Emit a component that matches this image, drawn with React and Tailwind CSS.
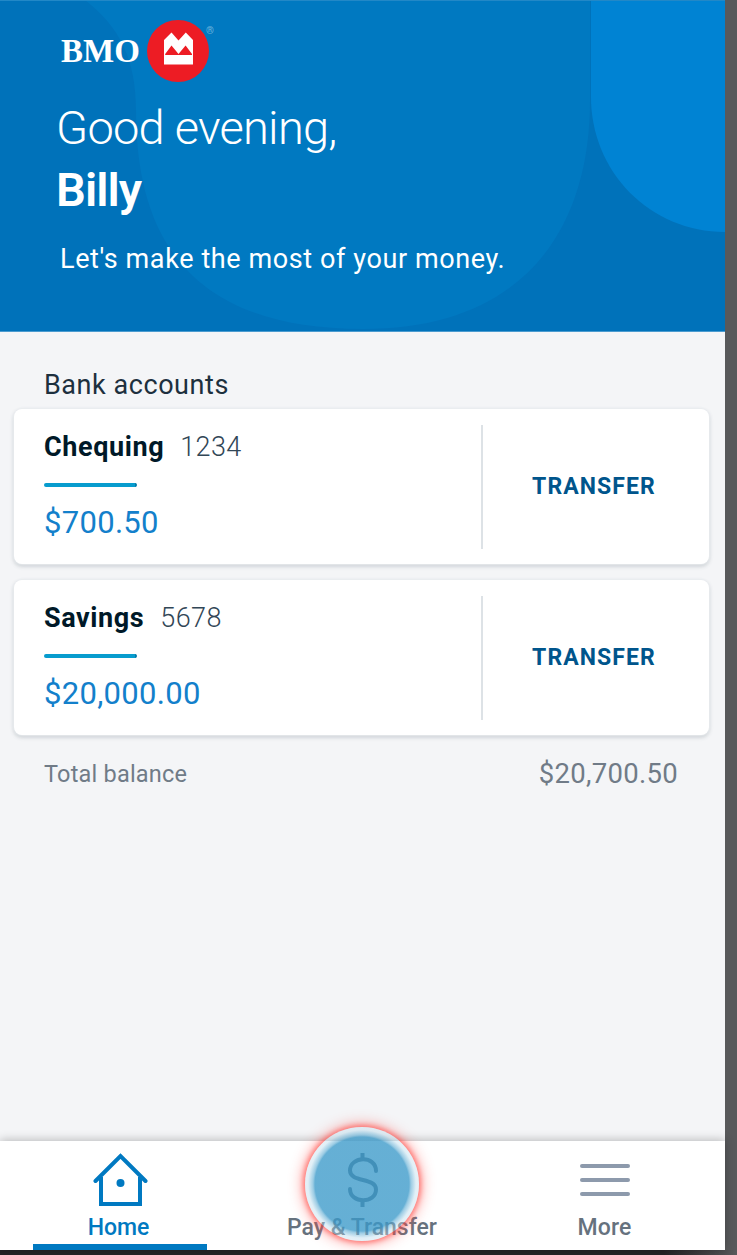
import React from 'react';

const accounts = [
  { name: 'Chequing', number: '1234', balance: '$700.50' },
  { name: 'Savings', number: '5678', balance: '$20,000.00' },
];

const Logo = () => (
  <div className="flex ml-[61px] mt-[19px] h-[64px] items-start text-white">
    <span className="w-[80px] mt-[12px] font-['Liberation_Serif'] font-bold text-[33px] leading-[40px] tracking-[0.1px] whitespace-nowrap">BMO</span>
    <svg className="ml-[6px] mt-px" width="62" height="62" viewBox="0 0 62 62">
      <circle cx="31" cy="31" r="31" fill="#ed1c24" />
      <path d="M17 20L24.500 12.500L31.500 20.500L38.800 12.500L46 20V44.500H17Z" fill="#fff" />
      <path d="M18.200 34L24.500 25.500L31.500 34L38.600 25.500L45 34V35H18.200Z" fill="#ed1c24" />
    </svg>
    <span className="-ml-[3px] mt-[6px] font-[Roboto] font-bold text-[10px] leading-[12px] text-[#68b2dc]">®</span>
  </div>
);

const Header = () => (
  <header className="relative h-[332px] bg-[#0072ba] border-b border-[#4b9bcf] overflow-hidden font-[Roboto] text-white">
    <svg className="absolute inset-0" width="725" height="332" viewBox="0 0 725 332">
      <path d="M85 0C120 27 136 60 136 110C136 239 191 329 363 329C519 329 590 235 590 100V0Z" fill="#0079c1" />
      <path d="M591 0V97C591 172 650 232 725 232V0Z" fill="#0083d3" />
      <path d="M0 .5H725" stroke="#2288c7" />
    </svg>
    <div className="relative flex flex-col">
      <Logo />
      <p className="ml-[56px] mt-[13px] text-[47px] leading-[64px] font-light tracking-[-0.75px]">Good evening,</p>
      <h1 className="ml-[56px] -mt-[2px] text-[47px] leading-[64px] font-semibold tracking-[-0.9px]">Billy</h1>
      <p className="ml-[60px] mt-[19px] text-[27px] leading-[36px] tracking-[0.6px]">Let's make the most of your money.</p>
    </div>
  </header>
);

const AccountCard = ({ name, number, balance }) => (
  <div className="flex h-[155px] items-center bg-white rounded-[8px] shadow-[0_0_2px_1px_#e9ecef,0_2px_4px_rgba(70,85,95,0.3)]">
    <div className="w-[467px] h-full pl-[30px] pt-[19px]">
      <div className="flex items-baseline leading-[38px] text-[27px]">
        <span className="font-bold text-[#001928] tracking-[0.6px]">{name}</span>
        <span className="ml-[16px] font-light text-[#314656] tracking-[0.4px]">{number}</span>
      </div>
      <div className="mt-[17px] w-[93px] h-[4px] rounded-sm bg-[#079cce] border-r-2 border-[#0079a8]" />
      <p className="mt-[16px] text-[31px] leading-[40px] text-[#1380cb] tracking-[0.3px]">{balance}</p>
    </div>
    <div className="w-[2px] h-[124px] bg-[#dde2e6]" />
    <button className="flex-1 h-full pt-[2px] pr-[4px] text-center text-[23px] font-bold text-[#00558c] tracking-[1.1px]">TRANSFER</button>
  </div>
);

const BottomNav = () => (
  <nav className="relative grid grid-cols-[239px_247px_239px] h-[109px] bg-white text-[23px] leading-[28px] font-medium text-[#66727e] shadow-[0_-1px_9px_rgba(0,0,0,0.25)]">
    <div className="flex flex-col items-center text-[#0079c1]">
      <svg className="mt-[11px]" width="56" height="56" viewBox="0 0 56 56" fill="none" stroke="currentColor" strokeWidth="4" strokeLinecap="round">
        <path d="M3.500 29L28.500 4L53.500 29" />
        <path d="M9 25V52H48V25" strokeLinecap="butt" />
        <circle cx="28.500" cy="31" r="4" fill="currentColor" stroke="none" />
      </svg>
      <span className="mt-[6px] -ml-[2px] leading-[28px]">Home</span>
      <div className="mt-auto w-[174px] h-[6px] bg-[#0079c1]" />
    </div>
    <div className="relative flex flex-col items-center">
      <svg className="mt-[11px]" width="40" height="56" viewBox="0 0 40 56" fill="none" stroke="#5c6f80" strokeWidth="4" strokeLinecap="butt">
        <path d="M19.500 1V8M19.500 48V55" />
        <path d="M33 19C33 3 7 4 7 18.500C7 31 33 25 33 37.500C33 52 7 52 7 37" strokeLinecap="round" />
      </svg>
      <span className="mt-[6px] -ml-px leading-[28px] whitespace-nowrap">Pay &amp; Transfer</span>
      {/* tap highlight */}
      <div className="absolute left-[66px] -top-[14px] size-[114px] rounded-full bg-[radial-gradient(circle,rgba(58,153,201,0.78)_47px,rgba(90,170,210,0.6)_49px,rgba(180,216,234,0.4)_54px,rgba(200,225,240,0.45)_57px)] shadow-[0_0_5px_2px_rgba(255,70,65,0.6),0_0_13px_4px_rgba(255,70,65,0.4)]" />
    </div>
    <div className="flex flex-col items-center">
      <div className="mt-[23px] -ml-[2px] flex flex-col gap-[10px]">
        <span className="w-[50px] h-[4px] rounded-full bg-[#8d9aac]" />
        <span className="w-[50px] h-[4px] rounded-full bg-[#8d9aac]" />
        <span className="w-[50px] h-[4px] rounded-full bg-[#8d9aac]" />
      </div>
      <span className="mt-[18px] -ml-[2px] leading-[28px] tracking-[0.2px]">More</span>
    </div>
  </nav>
);

const App = () => {
  return (
    <div className="w-[737px] h-[1255px] bg-[#58595b] overflow-hidden font-[Roboto]">
      <div className="w-[725px] h-[1250px] bg-[#f4f5f7] flex flex-col">
        <Header />
        <main className="flex-1 pl-[14px] pr-[16px]">
          <h2 className="pl-[30px] mt-[34px] text-[27px] leading-[38px] tracking-[0.55px] text-[#1d303e]">Bank accounts</h2>
          <div className="mt-[5px] flex flex-col gap-[16px]">
            {accounts.map((account) => (
              <AccountCard key={account.name} {...account} />
            ))}
          </div>
          <div className="mt-[20px] flex justify-between items-center pl-[30px] pr-[31px] leading-[36px] text-[#707b87]">
            <span className="pt-px text-[23.5px] tracking-[0.2px]">Total balance</span>
            <span className="text-[27.5px] tracking-[0.3px]">$20,700.50</span>
          </div>
        </main>
        <BottomNav />
      </div>
      <div className="h-[5px] bg-linear-to-r from-[#242224] from-90% to-[#58595b]" />
    </div>
  );
};

export default App;
